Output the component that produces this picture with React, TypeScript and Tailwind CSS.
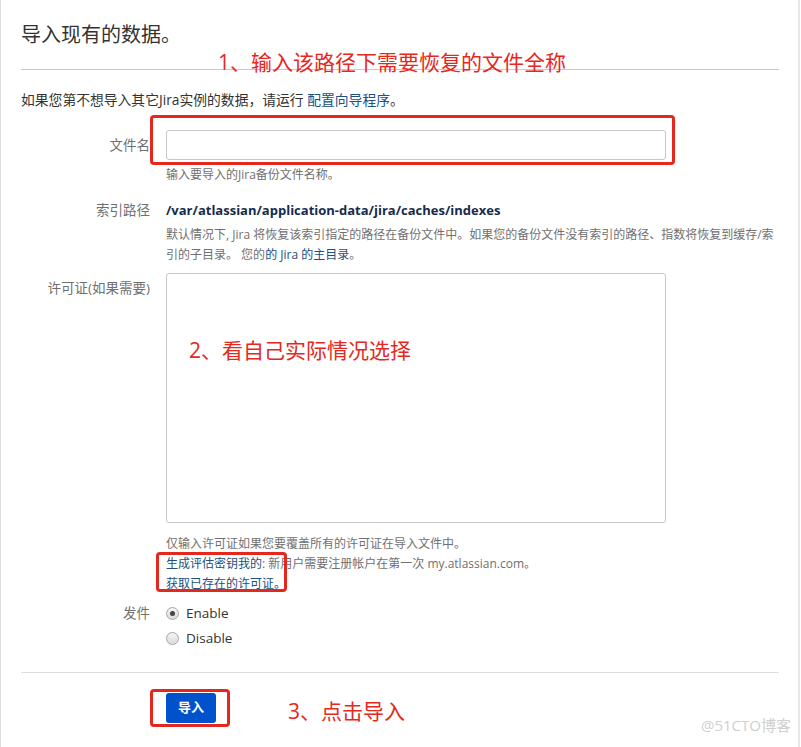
import React from "react";

const FONT = { fontFamily: '"Open Sans", "Noto Sans CJK SC", sans-serif' };

function Radio({ checked, label }: { checked?: boolean; label: string }) {
  return (
    <div className="flex items-center h-[25px]">
      <span className="w-[13px] h-[13px] rounded-full border border-[#a6a6a6] bg-gradient-to-b from-[#f4f4f4] to-[#dcdcdc] flex items-center justify-center">
        {checked && <span className="w-[5px] h-[5px] rounded-full bg-[#444]" />}
      </span>
      <span className="ml-[7px] text-[13.5px] text-[#333]">{label}</span>
    </div>
  );
}

export default function App() {
  return (
    <div className="relative w-[801px] h-[747px] bg-white overflow-hidden" style={FONT}>
      <div className="h-full w-[800px] border-l border-l-[#dedede] border-r-2 border-r-[#e8e8e8] pl-[20px] pr-[19px]">
        <div className="pt-[20px] pb-[19px] border-b border-[#c9c9c9]">
          <h1 className="text-[20px] leading-[30px] text-[#333] font-normal">导入现有的数据。</h1>
        </div>

        <p className="mt-[20px] text-[13.8px] leading-[20px] text-[#333]">
          如果您第不想导入其它Jira实例的数据，请运行 <span className="text-[#205081]">配置向导程序</span>。
        </p>

        <div className="mt-[20px] flex">
          <div className="w-[129px] text-right text-[13.5px] leading-[30px] text-[#707070]">文件名</div>
          <div className="ml-[16px] flex-1">
            <div className="w-[500px] h-[30px] border border-[#c7c7c7] rounded-[3px] bg-white" />
            <div className="mt-[5px] text-[12px] leading-[20px] text-[#707070]">输入要导入的Jira备份文件名称。</div>
          </div>
        </div>

        <div className="mt-[15px] flex">
          <div className="w-[129px] text-right text-[13.5px] leading-[20px] text-[#707070]">索引路径</div>
          <div className="ml-[16px] flex-1">
            <div className="text-[13px] leading-[20px] font-bold text-[#172b4d]">/var/atlassian/application-data/jira/caches/indexes</div>
            <div className="mt-[5px] text-[12px] leading-[20px] text-[#707070]">
              默认情况下, Jira 将恢复该索引指定的路径在备份文件中。如果您的备份文件没有索引的路径、指数将恢复到缓存/索引的子目录。 您的<span className="text-[#205081]">的 Jira 的主目录</span>。
            </div>
          </div>
        </div>

        <div className="mt-[8px] flex">
          <div className="w-[129px] text-right text-[13.5px] leading-[30px] text-[#707070]">许可证(如果需要)</div>
          <div className="ml-[16px] flex-1">
            <div className="w-[500px] h-[250px] border border-[#c7c7c7] rounded-[3px] bg-white" />
            <div className="mt-[11px] text-[12px] leading-[20px] text-[#707070]">
              <div>仅输入许可证如果您要覆盖所有的许可证在导入文件中。</div>
              <div>
                <span className="text-[#205081]">生成评估密钥我的</span>: 新用户需要注册帐户在第一次 my.atlassian.com。
              </div>
              <div className="text-[#205081]">获取已存在的许可证。</div>
            </div>
          </div>
        </div>

        <div className="mt-[7px] flex">
          <div className="w-[129px] text-right text-[13.5px] leading-[25px] text-[#707070]">发件</div>
          <div className="ml-[16px] flex-1">
            <Radio checked label="Enable" />
            <Radio label="Disable" />
          </div>
        </div>

        <div className="mt-[21px] border-t border-[#dcdcdc] pt-[20px] pl-[145px]">
          <button className="w-[50px] h-[30px] rounded-[3px] bg-[#0052cc] text-white text-[13px] font-bold">导入</button>
        </div>
      </div>

      {/* annotations */}
      <div className="absolute left-[218px] top-[50px] text-[21px] leading-[24px] text-[#e5281d]">1、输入该路径下需要恢复的文件全称</div>
      <div className="absolute left-[150px] top-[115px] w-[525px] h-[50px] border-[3px] border-[#e5281d] rounded-[4px]" />
      <div className="absolute left-[189px] top-[338px] text-[21px] leading-[24px] text-[#e5281d]">2、看自己实际情况选择</div>
      <div className="absolute left-[156px] top-[552px] w-[131px] h-[40px] border-[3px] border-[#e5281d] rounded-[4px]" />
      <div className="absolute left-[150px] top-[689px] w-[80px] h-[38px] border-[3px] border-[#e5281d] rounded-[4px]" />
      <div className="absolute left-[288px] top-[699px] text-[21px] leading-[24px] text-[#e5281d]">3、点击导入</div>
      <div className="absolute right-[10px] top-[715px] text-[15px] leading-[20px] text-[#cfcfcf]">@51CTO博客</div>
    </div>
  );
}
